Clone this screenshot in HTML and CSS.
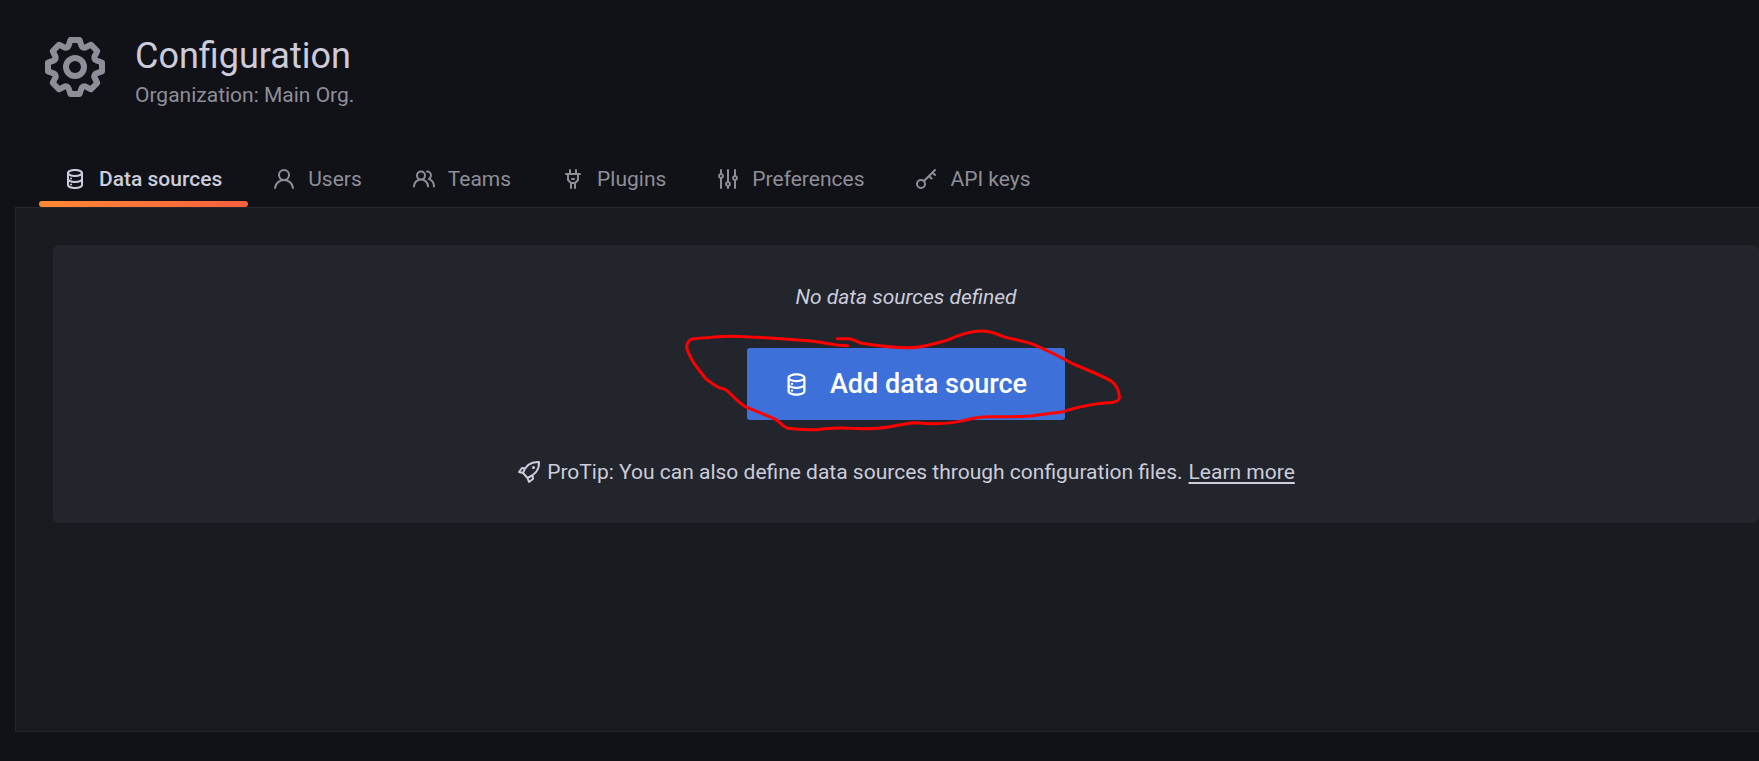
FILE: index.html
```
<!DOCTYPE html>
<html lang="en">
<head>
<meta charset="utf-8">
<title>Configuration: Data sources</title>
<link rel="stylesheet" href="styles.css">
</head>
<body>
<svg class="sprite" aria-hidden="true">
  <symbol id="database" viewBox="0 0 24 24"><path d="M8,16.5a1,1,0,1,0,1,1A1,1,0,0,0,8,16.5ZM12,2C8,2,4,3.37,4,6V18c0,2.63,4,4,8,4s8-1.37,8-4V6C20,3.37,16,2,12,2Zm6,16c0,.71-2.28,2-6,2s-6-1.29-6-2V14.73A13.16,13.16,0,0,0,12,16a13.16,13.16,0,0,0,6-1.27Zm0-6c0,.71-2.28,2-6,2s-6-1.29-6-2V8.73A13.16,13.16,0,0,0,12,10a13.16,13.16,0,0,0,6-1.27ZM12,8C8.28,8,6,6.71,6,6s2.28-2,6-2,6,1.29,6,2S15.72,8,12,8ZM8,10.5a1,1,0,1,0,1,1A1,1,0,0,0,8,10.5Z"/></symbol>
</svg>
<header class="page-header">
  <div class="page-heading">
    <svg class="page-logo" viewBox="0 0 24 24" aria-hidden="true"><path d="M21.32,9.55l-1.89-.63.89-1.78A1,1,0,0,0,20.13,6L18,3.87a1,1,0,0,0-1.15-.19l-1.78.89-.63-1.89A1,1,0,0,0,13.5,2h-3a1,1,0,0,0-.95.68L8.92,4.57,7.14,3.68A1,1,0,0,0,6,3.87L3.87,6a1,1,0,0,0-.19,1.15l.89,1.78-1.89.63A1,1,0,0,0,2,10.5v3a1,1,0,0,0,.68.95l1.89.63-.89,1.78A1,1,0,0,0,3.87,18L6,20.13a1,1,0,0,0,1.15.19l1.78-.89.63,1.89a1,1,0,0,0,.95.68h3a1,1,0,0,0,.95-.68l.63-1.89,1.78.89A1,1,0,0,0,18,20.13L20.13,18a1,1,0,0,0,.19-1.15l-.89-1.78,1.89-.63A1,1,0,0,0,22,13.5v-3A1,1,0,0,0,21.32,9.55ZM20,12.78l-1.2.4A2,2,0,0,0,17.64,16l.57,1.14-1.1,1.1L16,17.64a2,2,0,0,0-2.79,1.16l-.4,1.2H11.22l-.4-1.2A2,2,0,0,0,8,17.64l-1.14.57-1.1-1.1L6.36,16A2,2,0,0,0,5.2,13.18L4,12.78V11.22l1.2-.4A2,2,0,0,0,6.36,8L5.79,6.89l1.1-1.1L8,6.36A2,2,0,0,0,10.82,5.2l.4-1.2h1.56l.4,1.2A2,2,0,0,0,16,6.36l1.14-.57,1.1,1.1L17.64,8a2,2,0,0,0,1.16,2.79l1.2.4ZM12,8a4,4,0,1,0,4,4A4,4,0,0,0,12,8Zm0,6a2,2,0,1,1,2-2A2,2,0,0,1,12,14Z"/></svg>
    <div>
      <h1 class="page-title">Configuration</h1>
      <p class="page-subtitle">Organization: Main Org.</p>
    </div>
  </div>
  <nav class="tabs" aria-label="Configuration sections">
    <a class="tab tab-active" href="#datasources" aria-current="page"><svg class="icon" aria-hidden="true"><use href="#database"/></svg>Data sources</a>
    <a class="tab" href="#users"><svg class="icon" viewBox="0 0 24 24" aria-hidden="true"><path d="M15.71,12.71a6,6,0,1,0-7.42,0,10,10,0,0,0-6.22,8.18,1,1,0,0,0,2,.22,8,8,0,0,1,15.9,0,1,1,0,0,0,1,.89h.11a1,1,0,0,0,.88-1.1A10,10,0,0,0,15.71,12.71ZM12,12a4,4,0,1,1,4-4A4,4,0,0,1,12,12Z"/></svg>Users</a>
    <a class="tab" href="#teams"><svg class="icon" viewBox="0 0 24 24" aria-hidden="true"><path d="M12.3,12.22A4.92,4.92,0,0,0,14,8.5a5,5,0,0,0-10,0,4.92,4.92,0,0,0,1.7,3.72A8,8,0,0,0,1,19.5a1,1,0,0,0,2,0,6,6,0,0,1,12,0,1,1,0,0,0,2,0A8,8,0,0,0,12.3,12.22ZM9,11.5a3,3,0,1,1,3-3A3,3,0,0,1,9,11.5Zm9.74.32A5,5,0,0,0,15,3.5a1,1,0,0,0,0,2,3,3,0,0,1,3,3,3,3,0,0,1-1.5,2.59,1,1,0,0,0-.5.84,1,1,0,0,0,.45.86l.39.26.13.07a7,7,0,0,1,4,6.38,1,1,0,0,0,2,0A9,9,0,0,0,18.74,11.82Z"/></svg>Teams</a>
    <a class="tab" href="#plugins"><svg class="icon" viewBox="0 0 24 24" aria-hidden="true"><path d="M19,6H16V3a1,1,0,0,0-2,0V6H10V3A1,1,0,0,0,8,3V6H5A1,1,0,0,0,5,8H6v5a1,1,0,0,0,.29.71L9,16.41V21a1,1,0,0,0,2,0V17h2v4a1,1,0,0,0,2,0V16.41l2.71-2.7A1,1,0,0,0,18,13V8h1a1,1,0,0,0,0-2Zm-3,6.59L13.59,15H10.41L8,12.59V8h8ZM11,13h2a1,1,0,0,0,0-2H11a1,1,0,0,0,0,2Z"/></svg>Plugins</a>
    <a class="tab" href="#preferences"><svg class="icon" viewBox="0 0 24 24" aria-hidden="true"><path d="M20,8.18V3a1,1,0,0,0-2,0V8.18a3,3,0,0,0,0,5.64V21a1,1,0,0,0,2,0V13.82a3,3,0,0,0,0-5.64ZM19,12a1,1,0,1,1,1-1A1,1,0,0,1,19,12Zm-6,2.18V3a1,1,0,0,0-2,0V14.18a3,3,0,0,0,0,5.64V21a1,1,0,0,0,2,0V19.82a3,3,0,0,0,0-5.64ZM12,18a1,1,0,1,1,1-1A1,1,0,0,1,12,18ZM6,6.18V3A1,1,0,0,0,4,3V6.18a3,3,0,0,0,0,5.64V21a1,1,0,0,0,2,0V11.82A3,3,0,0,0,6,6.18ZM5,10A1,1,0,1,1,6,9,1,1,0,0,1,5,10Z"/></svg>Preferences</a>
    <a class="tab" href="#apikeys"><svg class="icon icon-line" viewBox="0 0 24 24" aria-hidden="true"><circle cx="7" cy="17" r="4"/><path d="M10 14 21 3M18.500 5.500l2.500 2.500M15 9l2.500 2.500"/></svg>API keys</a>
  </nav>
</header>
<main class="panel">
  <section class="card">
    <p class="empty-title">No data sources defined</p>
    <div class="cta">
      <button class="cta-button" type="button"><svg class="icon-large" aria-hidden="true"><use href="#database"/></svg>Add data source</button>
      <svg class="scribble" viewBox="0 0 1440 510" aria-hidden="true"><path d="M533 227 500 225C480 223 460 218 430 214C350 207 300 203 240 201C190 197 150 197 110 203C80 205 62 205 56 214C46 228 50 240 62 262C75 288 90 303 107 326C125 340 140 351 150 354C165 355 172 362 185 375C200 390 212 402 226 410C260 426 300 438 320 450C335 462 342 472 353 475C380 479 410 480 440 479C470 476 500 472 540 475C580 477 620 477 660 470C690 465 710 460 735 458C790 463 840 462 880 452C910 443 930 440 960 440C1010 440 1050 441 1090 437C1130 431 1160 428 1180 425C1200 418 1220 411 1250 407C1280 399 1310 398 1330 397C1345 393 1350 388 1348 378C1345 355 1335 340 1322 332C1290 314 1240 295 1210 282C1180 265 1130 240 1090 223C1060 212 1020 207 1000 200C970 187 950 181 920 184C890 187 860 198 830 211C800 219 770 228 740 232C700 237 640 230 575 220C560 214 548 207 537 206L502 206"/></svg>
    </div>
    <p class="tip"><svg class="icon icon-line" viewBox="0 0 24 24" aria-hidden="true"><path d="M6 13C8 7 13 1.500 22 2C22.500 10 17 15.500 10.500 18ZM8 8.500 5 8 2 12 6 13M15.500 15.500 16 19 12 22 10.500 18"/><circle class="icon-dot" cx="16.500" cy="7.500" r="1.500"/></svg>ProTip: You can also define data sources through configuration files. <a class="tip-link" href="#learn-more">Learn more</a></p>
  </section>
</main>
</body>
</html>
```
FILE: styles.css
```
* { box-sizing: border-box; }
body {
  margin: 0;
  min-height: 100vh;
  display: flex;
  flex-direction: column;
  background: #111217;
  color: #ccccdc;
  font: 400 21px/32px Roboto, sans-serif;
  overflow-x: hidden;
}
h1, p { margin: 0; }
svg { fill: currentColor; flex: none; }
.sprite { position: absolute; width: 0; height: 0; }
.icon { width: 24px; height: 24px; }
.icon-line { fill: none; stroke: currentColor; stroke-width: 2; stroke-linecap: round; stroke-linejoin: round; }
.icon-dot { fill: currentColor; stroke: none; }
.icon-large { width: 27px; height: 27px; }

.page-header { padding: 31px 39px 0; }
.page-heading { display: flex; gap: 24px; color: #8e8e99; }
.page-logo { width: 72px; height: 72px; }
.page-title { color: #ccccdc; font-size: 36px; line-height: 50px; font-weight: 400; }
.page-subtitle { line-height: 28px; }
.tabs { display: flex; margin-top: 42px; }
.tab {
  position: relative;
  display: flex;
  align-items: center;
  gap: 12px;
  height: 56px;
  padding: 0 26px 0 24px;
  color: #8e8e99;
  text-decoration: none;
}
.tab-active { color: #ccccdc; font-weight: 500; }
.tab-active::after {
  content: "";
  position: absolute;
  left: 0;
  right: 0;
  bottom: 0;
  height: 6px;
  border-radius: 3px;
  background: linear-gradient(90deg, #ff8833, #f55f3e);
}
.panel {
  flex: 1;
  margin: 0 0 29px 15px;
  padding: 37px 0 37px 37px;
  background: #181b1f;
  border: 1px solid #25262b;
  border-right: 0;
}
.card {
  display: flex;
  flex-direction: column;
  align-items: center;
  padding: 36px 36px 35px;
  border-radius: 6px;
  background: #22252b;
}
.empty-title { font-style: italic; }
.cta { position: relative; margin: 35px 0 36px; }
.cta-button {
  display: flex;
  align-items: center;
  gap: 20px;
  height: 72px;
  padding: 0 38px 0 36px;
  border: 0;
  border-radius: 3px;
  background: #3d71d9;
  color: #fff;
  font: 500 27px/32px Roboto, sans-serif;
}
.scribble {
  position: absolute;
  left: -77px;
  top: -78px;
  width: 480px;
  height: 170px;
  fill: none;
  stroke: #ff0000;
  stroke-width: 9;
  stroke-linecap: round;
  stroke-linejoin: round;
  pointer-events: none;
}
.tip { display: flex; align-items: center; gap: 6px; }
.tip-link { color: inherit; text-underline-offset: 3px; }
```
